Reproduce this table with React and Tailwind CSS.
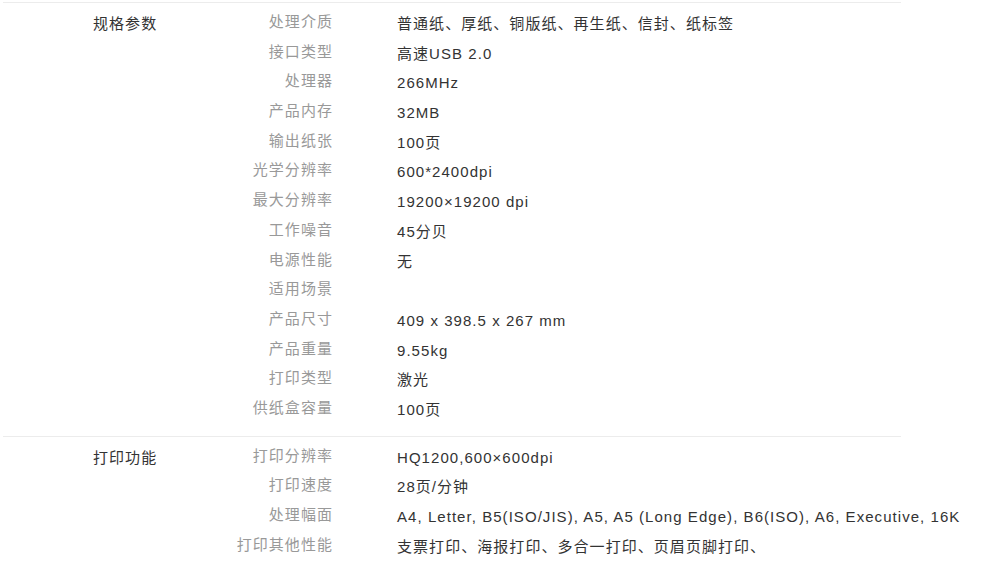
import React from 'react';

const sections = [
    {
        title: '规格参数',
        rows: [
            ['处理介质', '普通纸、厚纸、铜版纸、再生纸、信封、纸标签'],
            ['接口类型', '高速USB 2.0'],
            ['处理器', '266MHz'],
            ['产品内存', '32MB'],
            ['输出纸张', '100页'],
            ['光学分辨率', '600*2400dpi'],
            ['最大分辨率', '19200×19200 dpi'],
            ['工作噪音', '45分贝'],
            ['电源性能', '无'],
            ['适用场景', ''],
            ['产品尺寸', '409 x 398.5 x 267 mm'],
            ['产品重量', '9.55kg'],
            ['打印类型', '激光'],
            ['供纸盒容量', '100页'],
        ],
    },
    {
        title: '打印功能',
        rows: [
            ['打印分辨率', 'HQ1200,600×600dpi'],
            ['打印速度', '28页/分钟'],
            ['处理幅面', 'A4, Letter, B5(ISO/JIS), A5, A5 (Long Edge), B6(ISO), A6, Executive, 16K'],
            ['打印其他性能', '支票打印、海报打印、多合一打印、页眉页脚打印、'],
        ],
    },
];

const App = () => {
    return (
        <div
            className="min-h-screen bg-white pt-[2px] text-[15px] tracking-[1.05px]"
            style={{ fontFamily: '"Liberation Sans", "Noto Sans CJK SC", sans-serif' }}
        >
            <div className="ml-[3px] w-[898px]">
                {sections.map((section) => (
                    <div key={section.title} className="flex border-t border-[#ececec] pt-[6px] pb-[11px]">
                        <div className="w-[190px] shrink-0 pl-[90px] leading-[29.7px] text-[#333]">{section.title}</div>
                        <div className="flex-1">
                            {section.rows.map(([label, value]) => (
                                <div key={label} className="flex items-start h-[29.7px]">
                                    <div className="w-[140px] shrink-0 text-right leading-[25px] text-[#999]">{label}</div>
                                    <div className="ml-[64px] whitespace-nowrap leading-[29.7px] text-[#333]">{value}</div>
                                </div>
                            ))}
                        </div>
                    </div>
                ))}
            </div>
        </div>
    );
};

export default App;
